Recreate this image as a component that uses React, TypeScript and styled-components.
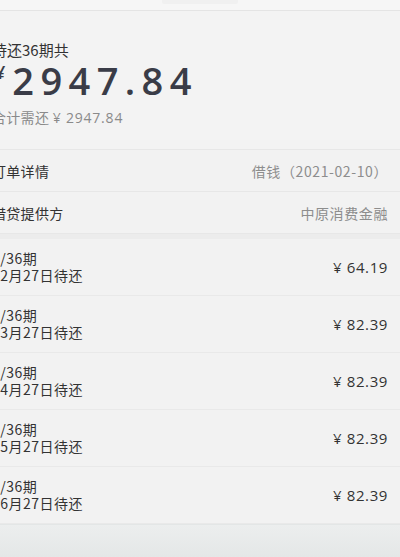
import React from 'react';
import styled, { createGlobalStyle } from 'styled-components';

const GlobalStyle = createGlobalStyle`
  html, body {
    margin: 0;
    padding: 0;
    background: #f2f2f2;
    overflow: hidden;
  }
  body {
    font-family: "Noto Sans CJK SC", "Liberation Sans", sans-serif;
    color: #333;
  }
`;

const Page = styled.div`
  width: 400px;
  height: 557px;
  display: flex;
  flex-direction: column;
  overflow: hidden;
  background: #f2f2f2;
`;

const Header = styled.div`
  height: 10px;
  flex-shrink: 0;
  display: flex;
  justify-content: center;
  align-items: flex-start;
  overflow: hidden;
  background: #f6f6f6;
  border-bottom: 1px solid #e4e4e4;
`;

// title of the top bar, scrolled almost out of view
const HeaderTitle = styled.div`
  height: 4px;
  width: 76px;
  background: #f0f0f0;
  border-radius: 0 0 2px 2px;
`;

// content is cropped on the left in the capture
const Body = styled.div`
  flex: 1;
  display: flex;
  flex-direction: column;
  margin-left: -8px;
`;

const Summary = styled.div`
  padding: 29px 12px 21px 0;
  display: flex;
  flex-direction: column;
  background: #f3f3f3;
  border-bottom: 1px solid #e7e7e7;
`;

const Caption = styled.div`
  font-size: 15px;
  line-height: 20px;
  color: #333;
`;

const Total = styled.div`
  display: flex;
  align-items: center;
  height: 40px;
  color: #3a3c47;
`;

const Yen = styled.span`
  align-self: flex-start;
  margin-top: 3px;
  font-family: "Open Sans", sans-serif;
  font-weight: 600;
  font-size: 18px;
  line-height: 18px;
  margin-left: 3px;
  margin-right: 7px;
`;

const Amount = styled.span`
  font-family: "Open Sans", sans-serif;
  font-size: 38px;
  line-height: 40px;
  font-weight: 600;
  letter-spacing: 6.4px;
`;

const Subtotal = styled.div`
  margin-top: 7px;
  font-size: 14px;
  line-height: 20px;
  color: #8a8a8a;
  letter-spacing: 0.3px;

  span {
    font-family: "Open Sans", sans-serif;
    letter-spacing: 0.8px;
  }
`;

const InfoRow = styled.div`
  height: 41px;
  display: flex;
  align-items: center;
  justify-content: space-between;
  padding-right: 12px;
  border-bottom: 1px solid #e7e7e7;
  font-size: 14px;
`;

const InfoLabel = styled.span`
  color: #333;
  letter-spacing: 0.3px;
`;

const InfoValue = styled.span`
  color: #8d8d8d;
  letter-spacing: 0.6px;
`;

const Gap = styled.div`
  height: 5px;
  background: #ececec;
`;

const List = styled.div`
  display: flex;
  flex-direction: column;
`;

const Item = styled.div`
  height: 56px;
  display: flex;
  align-items: center;
  justify-content: space-between;
  padding-right: 12px;
  border-bottom: 1px solid #e9e9e9;
`;

const ItemText = styled.div`
  display: flex;
  flex-direction: column;
  font-size: 14px;
  line-height: 17px;
  color: #333;
  letter-spacing: 0.5px;
`;

const ItemAmount = styled.div`
  font-family: "Open Sans", sans-serif;
  font-size: 15px;
  color: #333;
  letter-spacing: 0.6px;
`;

const Footer = styled.div`
  flex: 1;
  margin-left: 8px;
  border-top: 1px solid #e3e6e6;
  background: linear-gradient(#eceeee, #e4e7e7);
`;

const items = [
  { no: 1, month: '02', amount: '64.19' },
  { no: 2, month: '03', amount: '82.39' },
  { no: 3, month: '04', amount: '82.39' },
  { no: 4, month: '05', amount: '82.39' },
  { no: 5, month: '06', amount: '82.39' },
];

export default function App() {
  return (
    <Page>
      <GlobalStyle />
      <Header>
        <HeaderTitle />
      </Header>
      <Body>
        <Summary>
          <Caption>待还36期共</Caption>
          <Total>
            <Yen>¥</Yen>
            <Amount>2947.84</Amount>
          </Total>
          <Subtotal>
            合计需还 <span>¥ 2947.84</span>
          </Subtotal>
        </Summary>
        <InfoRow>
          <InfoLabel>订单详情</InfoLabel>
          <InfoValue>借钱（2021-02-10）</InfoValue>
        </InfoRow>
        <InfoRow>
          <InfoLabel>借贷提供方</InfoLabel>
          <InfoValue>中原消费金融</InfoValue>
        </InfoRow>
        <Gap />
        <List>
          {items.map(it => (
            <Item key={it.no}>
              <ItemText>
                <span>{it.no}/36期</span>
                <span>{it.month}月27日待还</span>
              </ItemText>
              <ItemAmount>¥ {it.amount}</ItemAmount>
            </Item>
          ))}
        </List>
        <Footer />
      </Body>
    </Page>
  );
}
